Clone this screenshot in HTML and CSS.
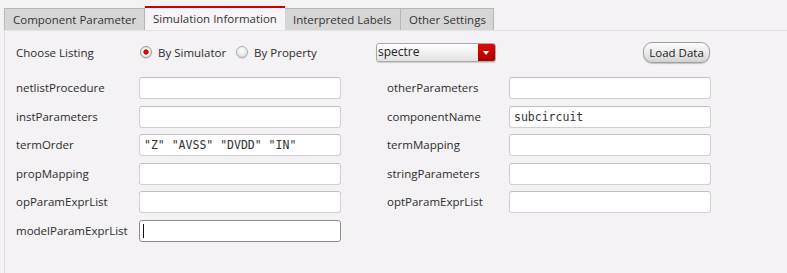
FILE: index.html
```html
<!DOCTYPE html>
<html lang="en">
<head>
    <meta charset="UTF-8">
    <title>Simulation Information</title>
    <link rel="stylesheet" href="styles.css">
</head>
<body>
    <div class="tabs">
        <div class="tab">Component Parameter</div>
        <div class="tab active">Simulation Information</div>
        <div class="tab">Interpreted Labels</div>
        <div class="tab">Other Settings</div>
    </div>

    <div class="panel">
        <div class="listing">
            <div class="listing-label">Choose Listing</div>
            <div class="radios">
                <label class="radio checked"><span class="dot"></span>By Simulator</label>
                <label class="radio"><span class="dot"></span>By Property</label>
            </div>
            <div class="select">
                <span class="select-value">spectre</span>
                <span class="select-arrow"></span>
            </div>
            <button class="btn">Load Data</button>
        </div>

        <div class="form-grid">
            <div class="lbl">netlistProcedure</div>
            <input class="field" type="text" value="">
            <div class="lbl right">otherParameters</div>
            <input class="field" type="text" value="">

            <div class="lbl">instParameters</div>
            <input class="field" type="text" value="">
            <div class="lbl right">componentName</div>
            <input class="field" type="text" value="subcircuit">

            <div class="lbl">termOrder</div>
            <input class="field" type="text" value='"Z" "AVSS" "DVDD" "IN"'>
            <div class="lbl right">termMapping</div>
            <input class="field" type="text" value="">

            <div class="lbl">propMapping</div>
            <input class="field" type="text" value="">
            <div class="lbl right">stringParameters</div>
            <input class="field" type="text" value="">

            <div class="lbl">opParamExprList</div>
            <input class="field" type="text" value="">
            <div class="lbl right">optParamExprList</div>
            <input class="field" type="text" value="">

            <div class="lbl">modelParamExprList</div>
            <div class="field-wrap">
                <input class="field focused" type="text" value="">
            </div>
        </div>
    </div>
</body>
</html>
```

FILE: styles.css
```css
* {
    margin: 0;
    padding: 0;
    box-sizing: border-box;
}

body {
    font-family: "Open Sans", "Noto Sans", sans-serif;
    font-size: 11.5px;
    color: #2c2c2c;
    background: #f4f2f4;
    width: 787px;
    height: 273px;
    overflow: hidden;
}

/* Tabs */
.tabs {
    display: flex;
    align-items: flex-end;
    padding: 6px 0 0 4px;
    height: 30px;
}

.tab {
    height: 22px;
    line-height: 21px;
    padding: 0 0 0 8px;
    background: #d6d6d6;
    border: 1px solid #b6b6b6;
    border-bottom: none;
    color: #333;
    font-size: 11.5px;
}

.tab:nth-child(1) { width: 141px; }
.tab:nth-child(3) { width: 116px; border-left: none; }
.tab:nth-child(4) { width: 93px; border-left: none; }

.tab.active {
    width: 140px;
    height: 24px;
    line-height: 21px;
    background: #f6f4f6;
    border: none;
    border-top: 2px solid #cc0000;
    padding-left: 8px;
}

/* Panel */
.panel {
    margin-left: 4px;
    border-left: 1px solid #dedbde;
    border-top: 1px solid #e4e1e4;
    height: 243px;
    padding: 10px 0 0 11px;
}

.listing {
    display: flex;
    align-items: center;
    width: 695px;
    height: 22px;
}

.listing-label {
    width: 124px;
}

.radios {
    display: flex;
    align-items: center;
    width: 236px;
}

.radio {
    display: flex;
    align-items: center;
    gap: 6px;
    margin-right: 10px;
}

.dot {
    width: 12px;
    height: 12px;
    border-radius: 50%;
    border: 1px solid #b0b0b0;
    background: radial-gradient(circle at 50% 35%, #ffffff 0%, #e8e8e8 60%, #c8c8c8 100%);
    box-shadow: 0 1px 1px rgba(0, 0, 0, 0.12);
}

.radio.checked .dot {
    border-color: #9a9a9a;
    background: radial-gradient(circle, #e81414 0%, #c40000 32%, #f6f6f6 42%, #d4d4d4 100%);
}

.select {
    display: flex;
    width: 120px;
    height: 19px;
    border: 1px solid #a9a9a9;
    border-radius: 3px;
    background: linear-gradient(#ffffff, #e2e2e2);
    overflow: hidden;
    box-shadow: 0 1px 1px rgba(0, 0, 0, 0.15);
}

.select-value {
    flex: 1;
    padding-left: 1px;
    line-height: 16px;
    font-size: 12px;
    color: #222;
}

.select-arrow {
    width: 17px;
    background: linear-gradient(#dc0a0a, #a80000);
    position: relative;
}

.select-arrow::after {
    content: '';
    position: absolute;
    left: 5px;
    top: 7px;
    border-left: 3.5px solid transparent;
    border-right: 3.5px solid transparent;
    border-top: 4px solid #ffffff;
}

.btn {
    margin-left: auto;
    margin-right: 1px;
    width: 67px;
    height: 21px;
    border: 1px solid #9e9e9e;
    border-radius: 9px;
    background: linear-gradient(#fdfdfd, #e6e6e6 60%, #d2d2d2);
    font-family: inherit;
    font-size: 11.5px;
    color: #222;
    box-shadow: 0 1px 1px rgba(0, 0, 0, 0.2);
}

/* Form */
.form-grid {
    display: grid;
    grid-template-columns: 123px 202px 168px 202px;
    grid-auto-rows: 22px;
    row-gap: 6.6px;
    margin-top: 14px;
}

.lbl {
    display: flex;
    align-items: center;
    padding-bottom: 1px;
}

.lbl.right {
    padding-left: 46px;
}

.field-wrap {
    position: relative;
}

.field {
    width: 202px;
    height: 22px;
    border: 1px solid #d2cfd2;
    border-top-color: #c2bfc2;
    border-radius: 3px;
    background: #ffffff;
    padding: 0 4px;
    font-family: "DejaVu Sans Mono", monospace;
    font-size: 11.5px;
    color: #333;
    outline: none;
}

.field.focused {
    border: 1px solid #8c8c8c;
}

.field-wrap::after {
    content: '';
    position: absolute;
    left: 4px;
    top: 4px;
    width: 1px;
    height: 14px;
    background: #111;
}
```
